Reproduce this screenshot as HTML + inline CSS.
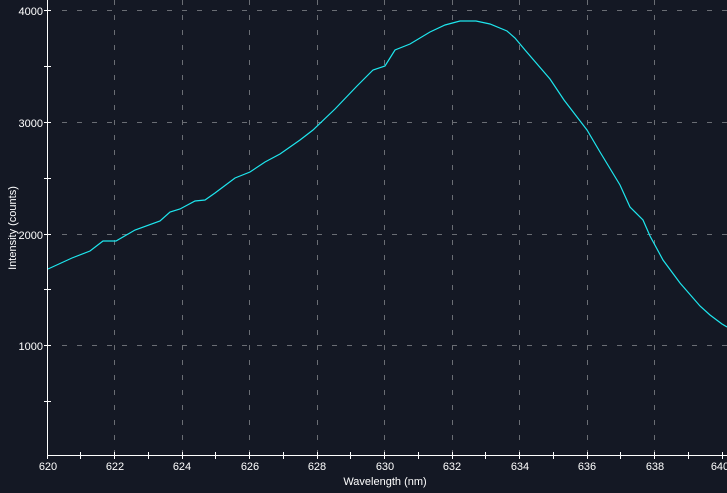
<!DOCTYPE html>
<html><head><style>
body{margin:0;background:#141824;width:727px;height:493px;overflow:hidden}
svg{display:block}
text{font-family:"Liberation Sans",sans-serif;fill:#fff;font-size:11px}
</style></head><body>
<svg width="727" height="493" viewBox="0 0 727 493">
<rect width="727" height="493" fill="#141824"/>
<g stroke="#6a6d74" stroke-width="1" stroke-dasharray="5,10">
<line x1="114.5" y1="0" x2="114.5" y2="455"/>
<line x1="182.5" y1="0" x2="182.5" y2="455"/>
<line x1="249.5" y1="0" x2="249.5" y2="455"/>
<line x1="317.5" y1="0" x2="317.5" y2="455"/>
<line x1="384.5" y1="0" x2="384.5" y2="455"/>
<line x1="452.5" y1="0" x2="452.5" y2="455"/>
<line x1="519.5" y1="0" x2="519.5" y2="455"/>
<line x1="587.5" y1="0" x2="587.5" y2="455"/>
<line x1="654.5" y1="0" x2="654.5" y2="455"/>
<line x1="62" y1="10.5" x2="727" y2="10.5"/>
<line x1="62" y1="122.5" x2="727" y2="122.5"/>
<line x1="62" y1="234.5" x2="727" y2="234.5"/>
<line x1="62" y1="345.5" x2="727" y2="345.5"/>
</g>
<g stroke="#fff" stroke-width="1">
<line x1="47.5" y1="0" x2="47.5" y2="459"/>
<line x1="47" y1="455.5" x2="727" y2="455.5"/>
<line x1="44" y1="10.5" x2="51" y2="10.5"/><line x1="44" y1="66.5" x2="51" y2="66.5"/>
<line x1="44" y1="122.5" x2="51" y2="122.5"/><line x1="44" y1="178.5" x2="51" y2="178.5"/>
<line x1="44" y1="234.5" x2="51" y2="234.5"/><line x1="44" y1="289.5" x2="51" y2="289.5"/>
<line x1="44" y1="345.5" x2="51" y2="345.5"/><line x1="44" y1="401.5" x2="51" y2="401.5"/>
<g>
<line x1="80.5" y1="452" x2="80.5" y2="459"/><line x1="114.5" y1="452" x2="114.5" y2="459"/>
<line x1="148.5" y1="452" x2="148.5" y2="459"/><line x1="182.5" y1="452" x2="182.5" y2="459"/>
<line x1="215.5" y1="452" x2="215.5" y2="459"/><line x1="249.5" y1="452" x2="249.5" y2="459"/>
<line x1="283.5" y1="452" x2="283.5" y2="459"/><line x1="317.5" y1="452" x2="317.5" y2="459"/>
<line x1="350.5" y1="452" x2="350.5" y2="459"/><line x1="384.5" y1="452" x2="384.5" y2="459"/>
<line x1="418.5" y1="452" x2="418.5" y2="459"/><line x1="452.5" y1="452" x2="452.5" y2="459"/>
<line x1="485.5" y1="452" x2="485.5" y2="459"/><line x1="519.5" y1="452" x2="519.5" y2="459"/>
<line x1="553.5" y1="452" x2="553.5" y2="459"/><line x1="587.5" y1="452" x2="587.5" y2="459"/>
<line x1="620.5" y1="452" x2="620.5" y2="459"/><line x1="654.5" y1="452" x2="654.5" y2="459"/>
<line x1="688.5" y1="452" x2="688.5" y2="459"/><line x1="722.5" y1="452" x2="722.5" y2="459"/>
</g>
</g>
<g text-anchor="end">
<text x="43" y="15">4000</text><text x="43" y="127">3000</text>
<text x="43" y="239">2000</text><text x="43" y="350">1000</text>
</g>
<g text-anchor="middle">
<text x="48" y="470">620</text><text x="115" y="470">622</text><text x="182" y="470">624</text>
<text x="250" y="470">626</text><text x="317" y="470">628</text><text x="385" y="470">630</text>
<text x="452" y="470">632</text><text x="520" y="470">634</text><text x="587" y="470">636</text>
<text x="655" y="470">638</text><text x="720" y="470">640</text>
<text x="385" y="485">Wavelength (nm)</text>
<text transform="translate(16,228) rotate(-90)">Intensity (counts)</text>
</g>
<polyline fill="none" stroke="#1ee6ee" stroke-width="1.2" points="48,269 72,258 90,251 103,241 116,241 135,230 160,221 170,212 180,209 195,201 205,200 215,193 235,178 250,172 265,162 280,154 290,147 300,140 313,130 335,109 357,86 373,70 385,66 395,50 410,44 430,32 445,25 460,21 476,21 490,24 507,31 515,38 525,50 550,79 564,100 587,130 600,152 620,185 630,207 643,220 650,236 663,260 680,283 700,306 710,315 722,324 727,327"/>
</svg>
</body></html>
